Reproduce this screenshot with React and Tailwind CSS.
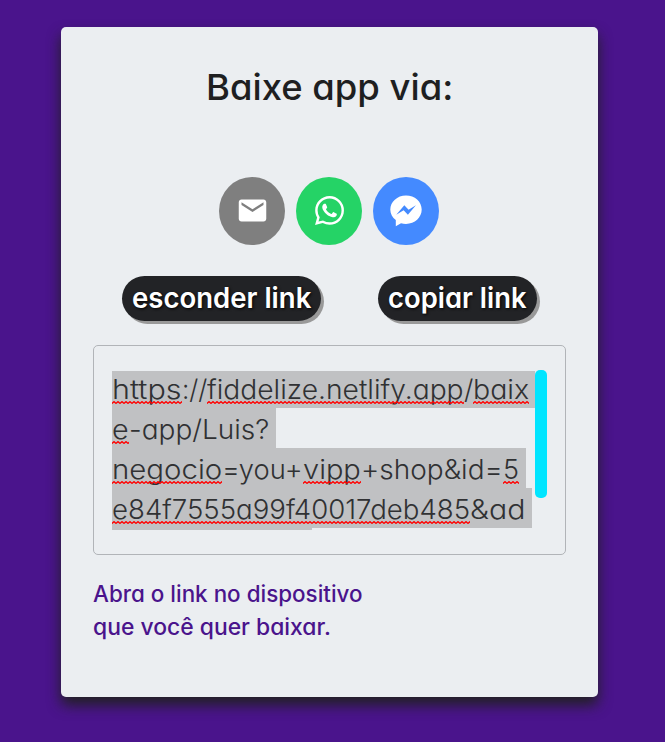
import React, { useLayoutEffect, useRef, useState } from "react";
import { MdEmail } from "react-icons/md";

// Stretches a run of text to a given width.
function Fit({ text, width, className = "" }) {
  const ref = useRef(null);
  const [scale, setScale] = useState(1);
  useLayoutEffect(() => {
    setScale(width / ref.current.offsetWidth);
  }, [text, width]);
  return (
    <span className={"block whitespace-nowrap " + className} style={{ width }}>
      <span ref={ref} className="inline-block origin-left" style={{ transform: `scaleX(${scale})` }}>{text}</span>
    </span>
  );
}

function Squiggle({ id }) {
  return (
    <svg className="absolute left-0 top-[33px] h-[3px] w-full" aria-hidden="true">
      <defs>
        <pattern id={id} width="4" height="3" patternUnits="userSpaceOnUse">
          <path d="M-1 1.5 L0 2.3 L2 0.7 L4 2.3 L5 1.5" fill="none" stroke="#f00" strokeWidth="1.4" />
        </pattern>
      </defs>
      <rect width="100%" height="3" fill={`url(#${id})`} />
    </svg>
  );
}

function WhatsappIcon() {
  return (
    <svg viewBox="0 0 24 24" className="-mt-0.5 h-[29px] w-[29px]" fill="currentColor" aria-hidden="true">
      <path d="M17.472 14.382c-.297-.149-1.758-.867-2.03-.967-.273-.099-.471-.148-.67.15-.197.297-.767.966-.94 1.164-.173.199-.347.223-.644.075-.297-.15-1.255-.463-2.39-1.475-.883-.788-1.48-1.761-1.653-2.059-.173-.297-.018-.458.13-.606.134-.133.298-.347.446-.52.149-.174.198-.298.298-.497.099-.198.05-.371-.025-.52-.075-.149-.669-1.612-.916-2.207-.242-.579-.487-.5-.669-.51-.173-.008-.371-.01-.57-.01-.198 0-.52.074-.792.372-.272.297-1.04 1.016-1.04 2.479 0 1.462 1.065 2.875 1.213 3.074.149.198 2.096 3.2 5.077 4.487.709.306 1.262.489 1.694.625.712.227 1.36.195 1.871.118.571-.085 1.758-.719 2.006-1.413.248-.694.248-1.289.173-1.413-.074-.124-.272-.198-.57-.347" />
      <path fillRule="evenodd" d="M12.05 0C5.495 0 .16 5.335.157 11.892c0 2.096.547 4.142 1.588 5.945L.057 24l6.305-1.654a11.88 11.88 0 0 0 5.683 1.448h.005c6.554 0 11.89-5.335 11.893-11.893A11.82 11.82 0 0 0 20.465 3.49 11.82 11.82 0 0 0 12.05 0Zm0 21.785a9.87 9.87 0 0 1-5.031-1.378l-.361-.214-3.741.982.998-3.648-.235-.374a9.86 9.86 0 0 1-1.51-5.26c.001-5.45 4.436-9.884 9.888-9.884a9.82 9.82 0 0 1 6.988 2.898 9.82 9.82 0 0 1 2.893 6.994c-.003 5.45-4.437 9.884-9.889 9.884Z" />
    </svg>
  );
}

function MessengerIcon() {
  return (
    <svg viewBox="0 0 32 32" className="-mt-px h-8 w-8" fill="currentColor" aria-hidden="true">
      <path fillRule="evenodd" d="M16 .5C7.200.5.300 6.900.300 14.500c0 4.300 2.100 8 5.500 10.500v6.200l5.200-2.900c1.600.400 3.300.600 5 .600 8.800 0 15.700-6.500 15.700-14.400S24.800.5 16 .5ZM6.300 19.800l8-9.500 4.300 4.400 7.300-4.400-8 9.500-4.300-4.500Z" />
    </svg>
  );
}

const lines = [
  { width: "w-[423px]", parts: [["https", 70, 1], ["://", 25, 0], ["fiddelize.netlify.app", 257, 1], ["/", 9, 0], ["baix", 56, 1]] },
  { width: "w-[164px]", parts: [["e", 17, 1], ["-app/Luis?", 140, 0]] },
  { width: "w-[414px]", parts: [["negocio", 110, 1], ["=you+", 81, 0], ["vipp", 58, 1], ["+shop&id=", 142, 0], ["5", 16, 1]] },
  { width: "w-[420px]", parts: [["e84f7555a99f40017deb485", 358, 1], ["&ad", 55, 0]] },
];

function LinkBox() {
  return (
    <div className="mx-8 mt-[24px] h-[210px] rounded-[5px] border border-[#b1b4b8] pl-[18px] pr-[18px] pt-6">
      <div className="flex">
        <div className="mt-px flex h-[159px] w-[423px] flex-col justify-start overflow-hidden">
          <div className="-mt-[3px]">
            {lines.map((line, i) => (
              <div key={i} className={"flex h-10 bg-[#c0c1c3] text-[27px] font-light leading-[43px] text-[#303133] " + line.width}>
                {line.parts.map(([text, width, marked], j) => (
                  <div key={j} className="relative">
                    <Fit text={text} width={width} />
                    {marked ? <Squiggle id={`wave-${i}-${j}`} /> : null}
                  </div>
                ))}
              </div>
            ))}
            <div className="h-10 w-[200px] bg-[#c0c1c3]" />
          </div>
        </div>
        <div className="h-32 w-3 rounded-[5px] bg-[#00e5ff]" />
      </div>
    </div>
  );
}

function Pill({ text, width, className }) {
  return (
    <button className={"flex h-[45px] items-center justify-center rounded-full bg-[#222326] text-[28px] font-semibold leading-[45px] text-white shadow-[3px_3px_0_#999] [text-shadow:1px_1px_3px_#000] " + className}>
      <Fit text={text} width={width} className="text-left" />
    </button>
  );
}

export default function App() {
  return (
    <div className="flex h-[742px] w-[665px] items-start bg-[#4a148c] pl-[61px] pt-[27px] font-['Inter','Open_Sans',sans-serif] [font-feature-settings:'cv11']">
      <main className="h-[670px] w-[537px] rounded-[5px] bg-[#ebeef1] shadow-[0_8px_14px_#212121]">
        <h1 className="flex justify-center pt-[35px] text-[36px] font-medium leading-[50px] text-[#1e1f21]">
          <Fit text="Baixe app via:" width={247} />
        </h1>
        <div className="mt-[65px] flex justify-center gap-[11px] pr-px text-white">
          <div className="flex h-[68px] w-[66px] items-center justify-center rounded-[50%] bg-[#7f7f7f]"><MdEmail size={33} className="-mt-0.5" /></div>
          <div className="flex h-[68px] w-[66px] items-center justify-center rounded-[50%] bg-[#25d366]"><WhatsappIcon /></div>
          <div className="flex h-[68px] w-[66px] items-center justify-center rounded-[50%] bg-[#448aff]"><MessengerIcon /></div>
        </div>
        <div className="mt-[31px] flex gap-[57px] pl-[61px]">
          <Pill text="esconder link" width={179} className="w-[199px]" />
          <Pill text="copiar link" width={139} className="w-[159px]" />
        </div>
        <LinkBox />
        <div className="ml-8 mt-[22px] text-[22.5px] font-medium leading-[33px] text-[#4a148c]">
          <Fit text="Abra o link no dispositivo" width={270} />
          <Fit text="que você quer baixar." width={238} />
        </div>
      </main>
    </div>
  );
}
